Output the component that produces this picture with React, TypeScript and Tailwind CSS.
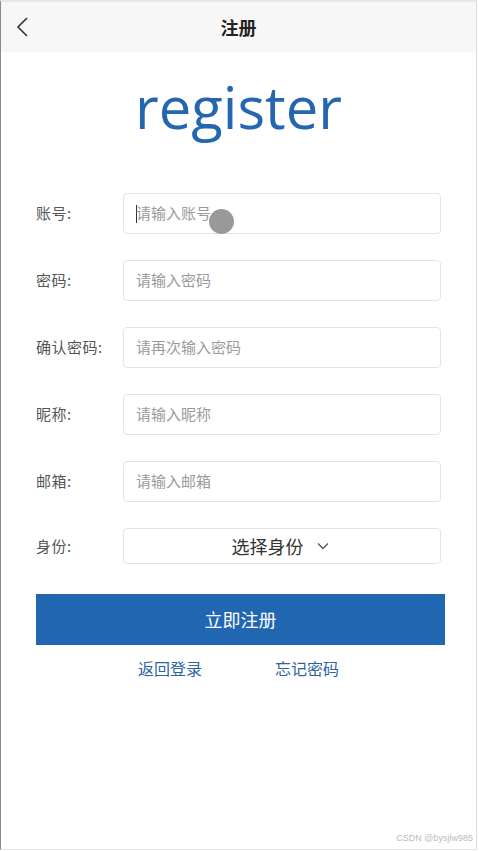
import React from "react";

const cjk = { fontFamily: '"Noto Sans CJK SC", "Noto Sans", sans-serif' };

function Row({ label, placeholder, cursor }: { label: string; placeholder: string; cursor?: boolean }) {
  return (
    <div className="flex items-center h-[41px]">
      <div className="w-[87px] text-[15px] tracking-[0.5px] text-[#555]">{label}</div>
      <div className="relative flex items-center w-[318px] h-[41px] rounded-[4px] border border-[#e4e4e4] bg-white pl-[12px]">
        {cursor && <div className="w-px h-[18px] bg-[#333] mr-[-1px]" />}
        <span className="text-[15px] text-[#9a9a9a]">{placeholder}</span>
      </div>
    </div>
  );
}

export default function App() {
  return (
    <div className="w-[479px] h-[851px] bg-white overflow-hidden" style={cjk}>
      <div className="relative w-[477px] h-[850px] border-l border-l-[#8a8a8a] border-t-2 border-t-[#e6e6e6] border-r border-r-[#dcdcdc] border-b border-b-[#e6e6e6] flex flex-col">
        <div className="relative h-[50px] bg-[#f7f7f7] flex items-center justify-center">
          <svg className="absolute left-[14px] top-[14px]" width="16" height="22" viewBox="0 0 16 22" fill="none">
            <path d="M12 2 L3 11 L12 20" stroke="#333" strokeWidth="1.6" />
          </svg>
          <span className="text-[18px] font-bold text-[#222]">注册</span>
        </div>
        <div className="flex justify-center mt-[17px] h-[76px]">
          <span className="text-[58px] leading-[76px] text-[#2566b0]" style={{ fontFamily: '"Open Sans", "Noto Sans", sans-serif' }}>register</span>
        </div>
        <div className="flex flex-col gap-[26px] pl-[35px] mt-[48px]">
          <Row label="账号:" placeholder="请输入账号" cursor />
          <Row label="密码:" placeholder="请输入密码" />
          <Row label="确认密码:" placeholder="请再次输入密码" />
          <Row label="昵称:" placeholder="请输入昵称" />
          <Row label="邮箱:" placeholder="请输入邮箱" />
          <div className="flex items-center h-[36px]">
            <div className="w-[87px] text-[15px] tracking-[0.5px] text-[#555]">身份:</div>
            <div className="flex items-center justify-center gap-[13px] w-[318px] h-[36px] rounded-[4px] border border-[#e4e4e4] pr-[4px]">
              <span className="text-[18px] text-[#333]">选择身份</span>
              <svg width="12" height="8" viewBox="0 0 12 8" fill="none">
                <path d="M1 1.5 L6 6.5 L11 1.5" stroke="#555" strokeWidth="1.3" />
              </svg>
            </div>
          </div>
        </div>
        <div className="ml-[35px] w-[409px] mt-[30px] h-[51px] bg-[#2166b0] flex items-center justify-center">
          <span className="text-[18px] text-white">立即注册</span>
        </div>
        <div className="flex mt-[11px] pl-[137px] gap-[73px] text-[16px] text-[#2d62a3]">
          <span>返回登录</span>
          <span>忘记密码</span>
        </div>
        <div className="absolute left-[208px] top-[207px] w-[25px] h-[25px] rounded-full bg-[#8e8e8e] opacity-90" />
        <div className="absolute right-[3px] bottom-[4px] text-[9px] text-[#bbb]" style={{ fontFamily: '"Liberation Sans", Arial, sans-serif' }}>CSDN @bysjlw985</div>
      </div>
    </div>
  );
}
